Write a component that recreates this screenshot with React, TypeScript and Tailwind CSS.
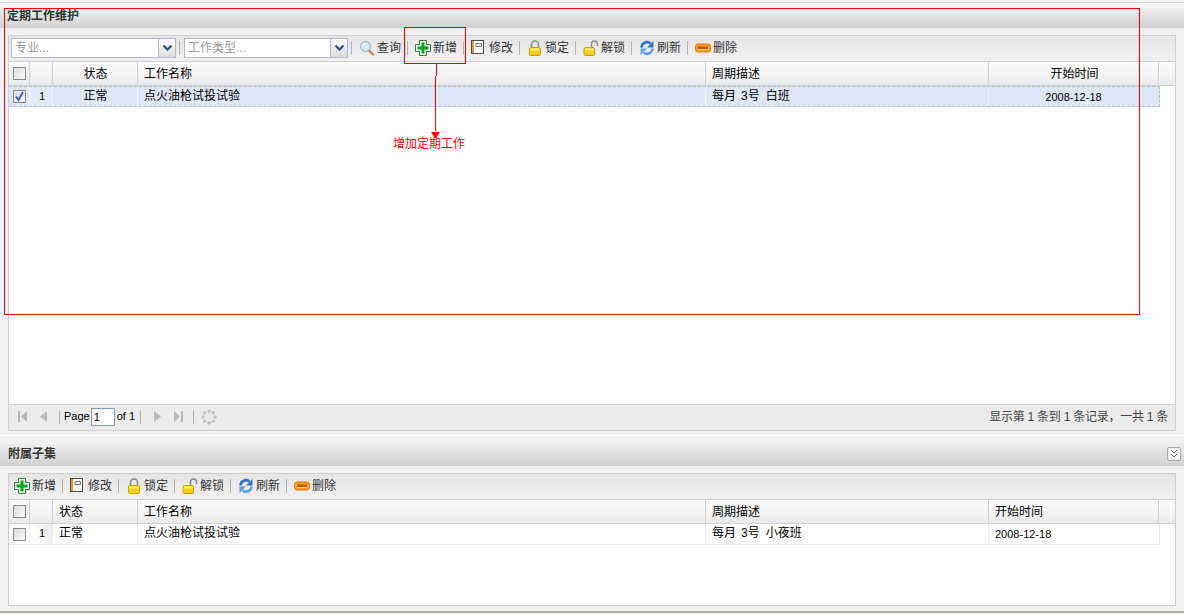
import type { ReactNode } from "react";

const columnBorder = "border-r border-[#d0d0d0]";

function PlusIcon() {
  return (
    <svg width="16" height="16" viewBox="0 0 16 16">
      <path d="M4.500.5h7v4h4v7h-4v4h-7v-4h-4v-7h4z" fill="#eef7ee" stroke="#2f7d3a" />
      <path d="M6.500 2.500h3v4h4v3h-4v4h-3v-4h-4v-3h4z" fill="#0f9d1c" />
    </svg>
  );
}

function EditIcon() {
  return (
    <svg width="16" height="16" viewBox="0 0 16 16">
      <rect x=".5" y=".5" width="12" height="13" fill="#fff" stroke="#4a4a4a" />
      <rect x="1" y="1" width="2" height="12" fill="#e8962e" />
      <path d="M5 3.500h5.500v3H5z" fill="#f4f4f4" stroke="#777" />
    </svg>
  );
}

function LockIcon() {
  return (
    <svg width="16" height="16" viewBox="0 0 16 16">
      <path d="M4.500 8V4.500a3.500 3.500 0 0 1 7 0V8" fill="none" stroke="#8c8c8c" strokeWidth="1.600" />
      <rect x="2.500" y="7.500" width="11" height="8" rx="1.500" fill="#f6cf16" stroke="#c9a00c" />
      <rect x="3.500" y="8.500" width="9" height="2" fill="#fdf07a" />
    </svg>
  );
}

function UnlockIcon() {
  return (
    <svg width="16" height="16" viewBox="0 0 16 16">
      <path d="M8.500 8V4a3 3 0 0 1 6 0v2" fill="none" stroke="#8c8c8c" strokeWidth="1.600" />
      <rect x="1" y="7.500" width="10.500" height="8" rx="1.500" fill="#f6cf16" stroke="#c9a00c" />
      <rect x="2" y="8.500" width="8.500" height="2" fill="#fdf07a" />
    </svg>
  );
}

function RefreshIcon() {
  return (
    <svg width="16" height="16" viewBox="0 0 16 16">
      <path d="M2.500 7.500A5.500 5.500 0 0 1 11.500 3.500" fill="none" stroke="#2f6fc4" strokeWidth="2.600" />
      <path d="M14.500 1v6.500H8z" fill="#2f6fc4" />
      <path d="M13.500 8.500A5.500 5.500 0 0 1 4.500 12.500" fill="none" stroke="#5f9fe2" strokeWidth="2.600" />
      <path d="M1.500 15V8.500H8z" fill="#5f9fe2" />
    </svg>
  );
}

function DeleteIcon() {
  return (
    <svg width="16" height="16" viewBox="0 0 16 16">
      <rect x=".5" y="4" width="15" height="8" rx="2.500" fill="#f9a02b" stroke="#e8700f" />
      <rect x="3" y="6.500" width="10" height="3" fill="#c9560f" />
      <rect x="3" y="9" width="10" height="1" fill="#ffe27a" />
    </svg>
  );
}

function SearchIcon() {
  return (
    <svg width="16" height="16" viewBox="0 0 16 16">
      <path d="M9.500 10l4.500 4.500" stroke="#c08a50" strokeWidth="2.400" strokeLinecap="round" />
      <circle cx="6.500" cy="6.500" r="5" fill="#d6e8fa" stroke="#8fa8c4" />
      <path d="M3.500 6.500a3 3 0 0 1 3-3" fill="none" stroke="#fff" />
    </svg>
  );
}

function Separator() {
  return <span className="ml-[6px] mr-[7px] h-[14px] w-px shrink-0 bg-[#b4b4b4]" />;
}

function ToolButton({ icon, label }: { icon: ReactNode; label: string }) {
  return (
    <span className="flex shrink-0 items-center gap-[2px] text-[12px] text-[#333]">
      <span className="h-[16px] w-[16px]">{icon}</span>
      <span className="w-[24px] whitespace-nowrap">{label}</span>
    </span>
  );
}

function ActionButtons() {
  return (
    <>
      <ToolButton icon={<PlusIcon />} label="新增" />
      <Separator />
      <ToolButton icon={<EditIcon />} label="修改" />
      <Separator />
      <ToolButton icon={<LockIcon />} label="锁定" />
      <Separator />
      <ToolButton icon={<UnlockIcon />} label="解锁" />
      <Separator />
      <ToolButton icon={<RefreshIcon />} label="刷新" />
      <Separator />
      <ToolButton icon={<DeleteIcon />} label="删除" />
    </>
  );
}

function Combo({ placeholder, width }: { placeholder: string; width: string }) {
  return (
    <div className={`flex h-[20px] shrink-0 border border-[#b5b8c8] bg-white ${width}`}>
      <span className="flex-1 pl-[3px] text-[12px] leading-[18px] text-[#999]">{placeholder}</span>
      <span className="flex w-[17px] items-center justify-center border-l border-[#b5b8c8] bg-gradient-to-b from-[#fafafa] to-[#dcdcdc]">
        <svg width="9" height="6" viewBox="0 0 9 6">
          <path d="M.5.5L4.500 4.500 8.500.5" fill="none" stroke="#2b4a85" strokeWidth="2" />
        </svg>
      </span>
    </div>
  );
}

function CheckBox({ checked }: { checked?: boolean }) {
  return (
    <span className="flex h-[13px] w-[13px] items-center justify-center border border-[#8a8a8a] bg-gradient-to-br from-[#dcdcdc] to-[#fafafa]">
      {checked && (
        <svg width="11" height="11" viewBox="0 0 11 11">
          <path d="M2 5.500L4.500 9 9 1" fill="none" stroke="#2e5fae" strokeWidth="1.800" />
        </svg>
      )}
    </span>
  );
}

function HeaderRow({ centered }: { centered?: boolean }) {
  return (
    <div className="flex h-[24px] shrink-0 border-b border-[#d0d0d0] bg-gradient-to-b from-[#fbfbfb] via-[#f4f4f4] to-[#e9e9e9] text-[12px] leading-[25px] text-black">
      <div className={`flex w-[21px] items-center justify-center ${columnBorder}`}>
        <CheckBox />
      </div>
      <div className={`w-[23px] ${columnBorder}`} />
      <div className={`w-[85px] ${columnBorder} ${centered ? "pl-[1px] text-center" : "pl-[6px]"}`}>状态</div>
      <div className={`w-[568px] pl-[6px] ${columnBorder}`}>工作名称</div>
      <div className={`w-[283px] pl-[6px] ${columnBorder}`}>周期描述</div>
      <div className={`w-[170px] ${columnBorder} ${centered ? "pl-[2px] text-center" : "pl-[6px]"}`}>开始时间</div>
      <div className="flex-1" />
    </div>
  );
}

function DataRow({ selected, shift }: { selected?: boolean; shift: string }) {
  const cellLine = selected ? "border-r border-[#eef2fa]" : "border-r border-[#eeeef2]";
  return (
    <div
      className={`flex h-[21px] w-[1151px] shrink-0 text-[12px] leading-[19px] text-black ${
        selected
          ? "border-y border-r border-dashed border-[#a9bce8] bg-[#dde6f5]"
          : "border-r border-b border-[#e8e8e8] bg-white"
      }`}
    >
      <div className={`flex w-[21px] items-center justify-center ${cellLine}`}>
        <CheckBox checked={selected} />
      </div>
      <div
        className={`w-[23px] pl-[9px] text-[11px] ${cellLine} ${
          selected ? "bg-[#e3eaf7]" : "bg-gradient-to-r from-white to-[#eeeef2]"
        }`}
      >
        1
      </div>
      <div className={`w-[85px] ${cellLine} ${selected ? "pl-[1px] text-center" : "pl-[6px]"}`}>正常</div>
      <div className={`w-[568px] pl-[6px] ${cellLine}`}>点火油枪试投试验</div>
      <div className={`flex w-[283px] pl-[6px] ${cellLine}`}>
        <span>每月</span>
        <span className="ml-[5px]">3号</span>
        <span className="ml-[6px]">{shift}</span>
      </div>
      <div className={`flex-1 text-[11px] leading-[20px] ${selected ? "pr-[1px] text-center" : "pl-[6px]"}`}>2008-12-18</div>
    </div>
  );
}

function Pager() {
  return (
    <div className="flex h-[26px] shrink-0 items-center border-t border-[#d0d0d0] bg-[#ebebeb] pb-[2px] pl-[8px] pr-[7px] text-[11px] text-black">
      <svg width="10" height="11" viewBox="0 0 10 11">
        <path d="M1 0h2v11H1zM10 0v11L4 5.500z" fill="#b8b8b8" />
      </svg>
      <svg width="7" height="11" viewBox="0 0 7 11" className="ml-[13px]">
        <path d="M7 0v11L0 5.500z" fill="#b8b8b8" />
      </svg>
      <span className="ml-[12px] h-[14px] w-px bg-[#b4b4b4]" />
      <span className="ml-[4px]">Page</span>
      <span className="ml-[1px] h-[18px] w-[24px] border border-[#7f9db9] bg-white pl-[2px] leading-[16px]">1</span>
      <span className="ml-[2px]">of 1</span>
      <span className="ml-[5px] h-[14px] w-px bg-[#b4b4b4]" />
      <svg width="7" height="11" viewBox="0 0 7 11" className="ml-[13px]">
        <path d="M0 0v11l7-5.500z" fill="#b8b8b8" />
      </svg>
      <svg width="10" height="11" viewBox="0 0 10 11" className="ml-[13px]">
        <path d="M0 0v11l6-5.500zM7 0h2v11H7z" fill="#b8b8b8" />
      </svg>
      <span className="ml-[9px] h-[14px] w-px bg-[#b4b4b4]" />
      <svg width="16" height="16" viewBox="0 0 16 16" className="ml-[7px]">
        <g fill="#c4c2ba">
          <circle cx="8" cy="2" r="1.800" />
          <circle cx="12.300" cy="3.700" r="1.800" />
          <circle cx="14" cy="8" r="1.800" />
          <circle cx="12.300" cy="12.300" r="1.800" />
          <circle cx="8" cy="14" r="1.800" />
          <circle cx="3.700" cy="12.300" r="1.800" />
          <circle cx="2" cy="8" r="1.800" />
          <circle cx="3.700" cy="3.700" r="1.800" />
        </g>
      </svg>
      <span className="ml-auto text-[12px] tracking-[-0.25px] text-[#444]">显示第 1 条到 1 条记录，一共 1 条</span>
    </div>
  );
}

export default function App() {
  return (
    <div className="relative flex h-[614px] w-[1184px] flex-col overflow-hidden bg-[#f1f1f1] font-['Liberation_Sans','Noto_Sans_CJK_SC',sans-serif]">
      {/* top strip */}
      <div className="mt-[2px] h-[6px] shrink-0 border-t border-[#d4d4d4] bg-[#f4f4f4]" />

      <div className="flex h-[20px] shrink-0 items-center bg-gradient-to-b from-[#efefef] to-[#d0d0d0] pb-[5px] pl-[7px] text-[12px] font-bold text-[#333]">
        定期工作维护
      </div>

      <div className="px-[8px] pt-[7px]">
        <div className="flex h-[396px] flex-col border border-[#cfcfcf] bg-white">
          <div className="flex h-[26px] shrink-0 items-center border-b border-[#cfcfcf] bg-gradient-to-b from-[#e5e5e5] to-[#f0f0f0] pb-[1px] pl-[2px]">
            <Combo placeholder="专业..." width="w-[165px]" />
            <span className="mx-[3px] h-[14px] w-px shrink-0 bg-[#b4b4b4]" />
            <span className="w-px shrink-0" />
            <Combo placeholder="工作类型..." width="w-[164px]" />
            <span className="ml-[3px] mr-[7px] h-[14px] w-px shrink-0 bg-[#b4b4b4]" />
            <ToolButton icon={<SearchIcon />} label="查询" />
            <Separator />
            <ActionButtons />
          </div>
          <HeaderRow centered />
          <DataRow selected shift="白班" />
          <div className="flex-1" />
          <Pager />
        </div>
      </div>

      <div className="mt-[4px] h-[6px] shrink-0 border-t border-white" />

      <div className="flex h-[25px] shrink-0 items-center justify-between bg-gradient-to-b from-[#f1f1f1] to-[#d0d0d0] pl-[8px] pr-[3px] text-[12px] font-bold text-[#333]">
        附属子集
        <span className="flex h-[14px] w-[14px] items-center justify-center rounded-[2px] border border-[#aaa] bg-[#f4f4f4]">
          <svg width="8" height="9" viewBox="0 0 8 9">
            <path d="M1 1l3 3 3-3M1 5l3 3 3-3" fill="none" stroke="#666" />
          </svg>
        </span>
      </div>

      <div className="px-[8px] pt-[7px]">
        <div className="flex h-[133px] flex-col border border-[#cfcfcf] bg-white">
          <div className="flex h-[26px] shrink-0 items-center border-b border-[#cfcfcf] bg-gradient-to-b from-[#e5e5e5] to-[#f0f0f0] pb-[1px] pl-[5px]">
            <ActionButtons />
          </div>
          <HeaderRow />
          <DataRow shift="小夜班" />
        </div>
      </div>

      <div className="mt-[5px] h-[3px] shrink-0 border-t-2 border-[#b4b4ac] bg-white" />

      {/* red annotations drawn over the page */}
      <div className="absolute left-[4px] top-[8px] h-[307px] w-[1136px] border border-[#ff0000]" />
      <div className="absolute left-[404px] top-[27px] h-[37px] w-[62px] border border-[#e00000]" />
      <svg width="20" height="74" viewBox="0 0 20 74" className="absolute left-[427px] top-[64px]">
        <path d="M9.500 0v12M8.500 12v55" stroke="#ff0000" fill="none" />
        <path d="M4 68h9l-4.500 7z" fill="#ff0000" />
      </svg>
      <span className="absolute left-[393px] top-[136px] text-[12px] leading-[16px] text-[#ff0000]">增加定期工作</span>
    </div>
  );
}
